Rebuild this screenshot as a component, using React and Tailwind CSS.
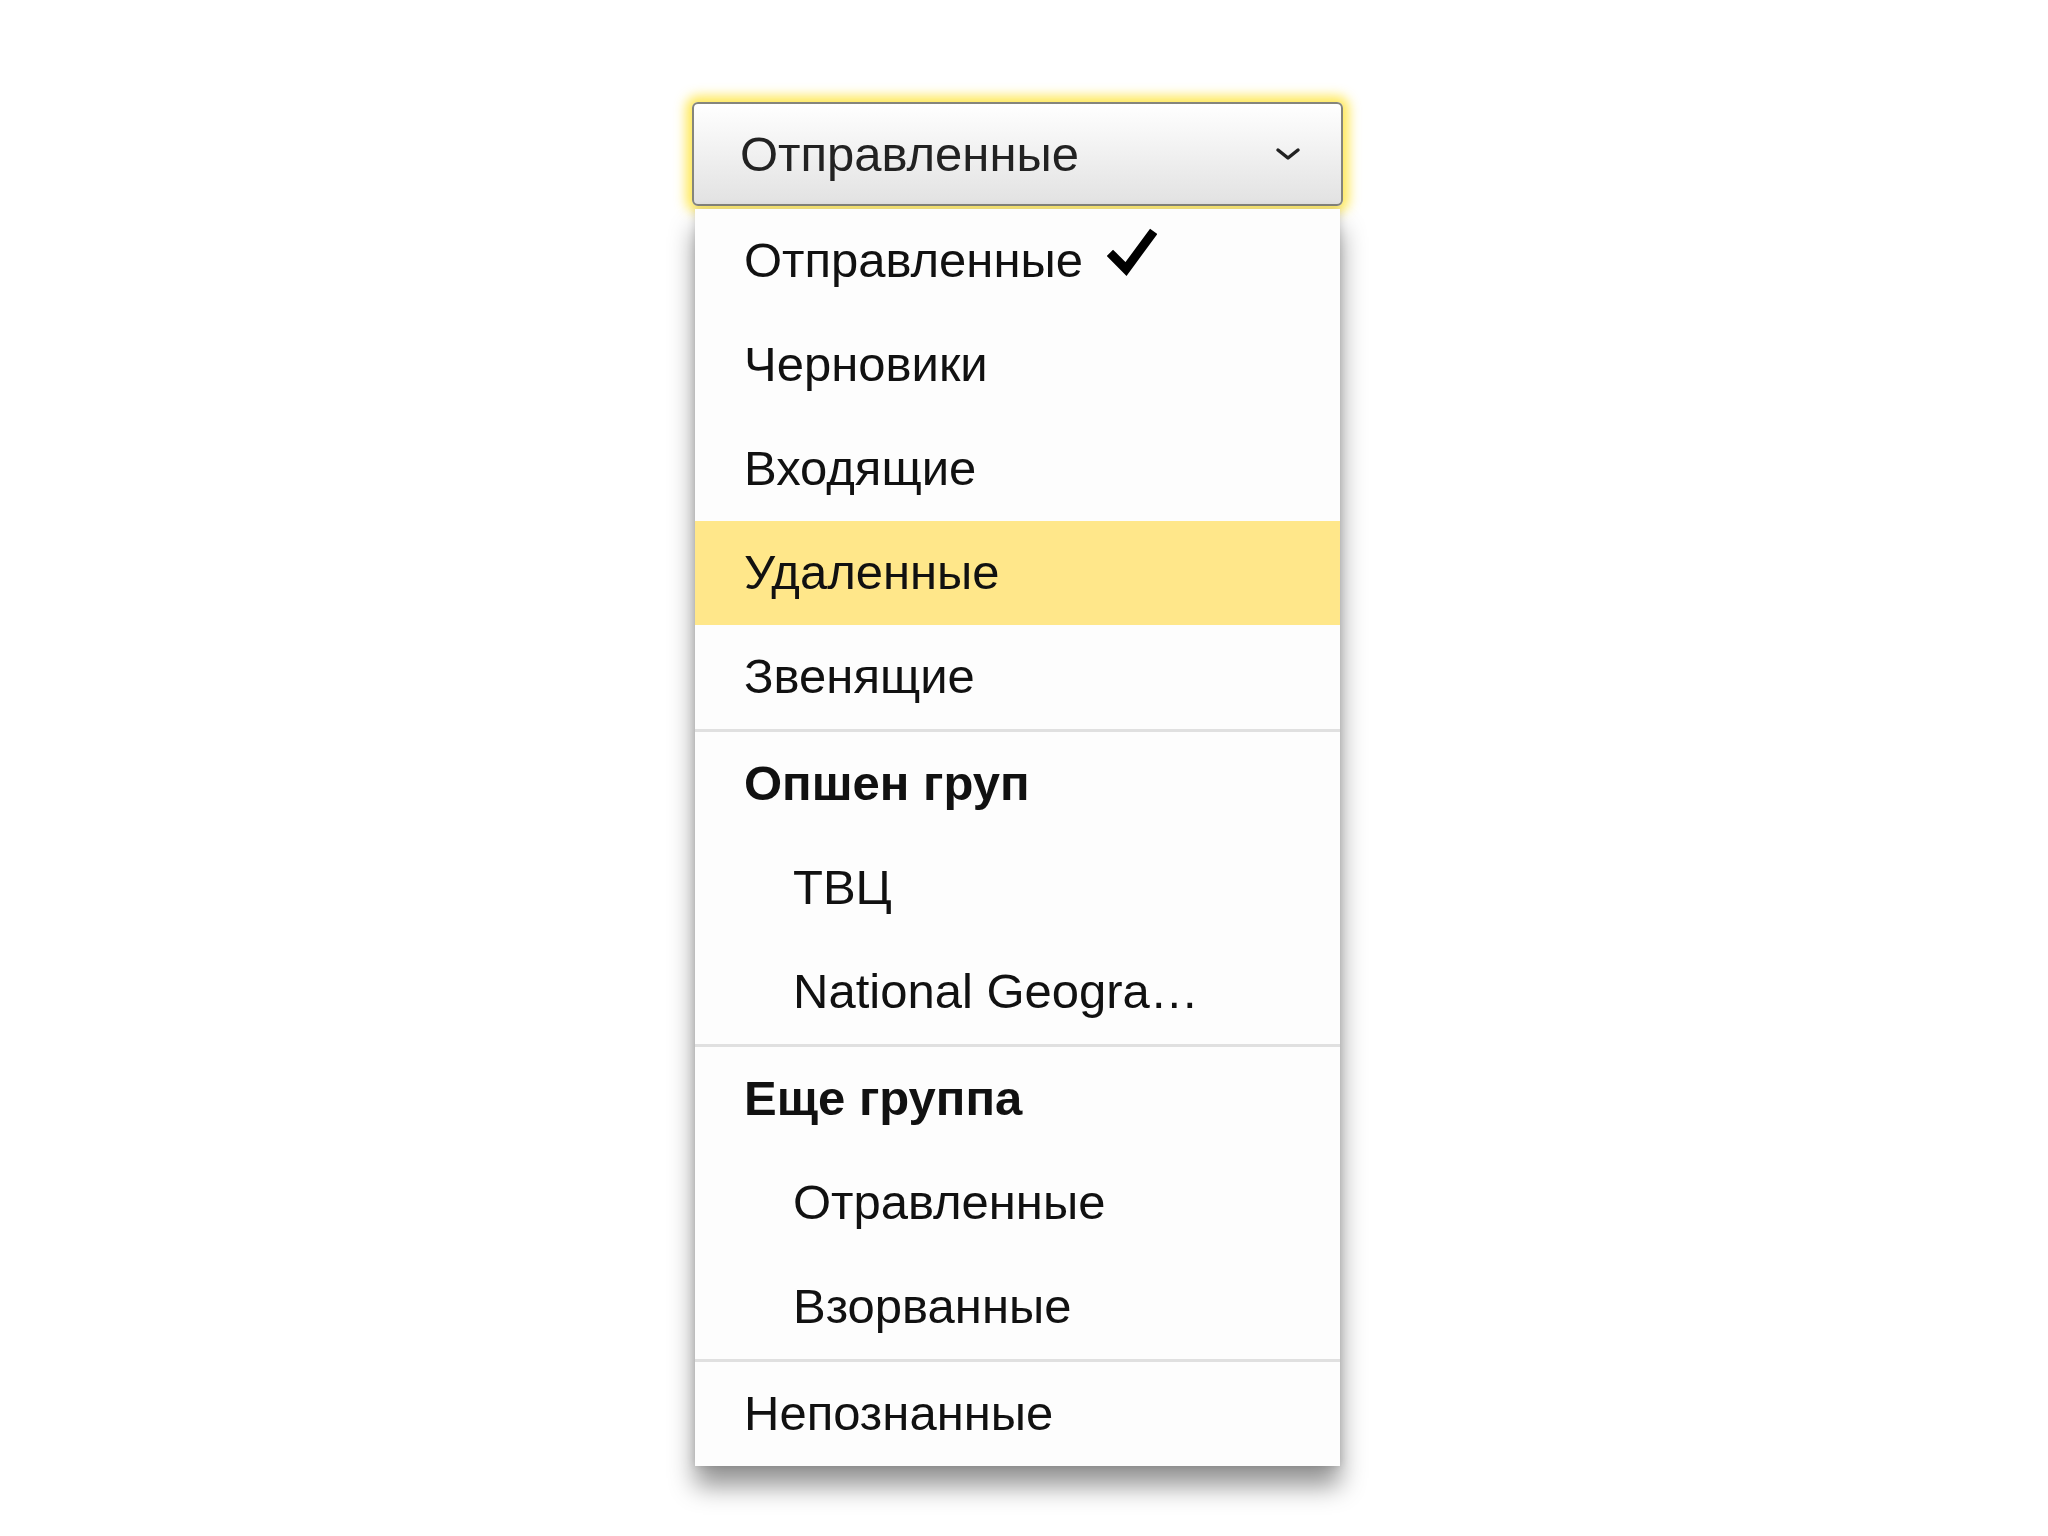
import React from "react";

const groups = [
  {
    items: [
      { label: "Отправленные", checked: true },
      { label: "Черновики" },
      { label: "Входящие" },
      { label: "Удаленные", active: true },
      { label: "Звенящие" },
    ],
  },
  {
    title: "Опшен груп",
    items: [{ label: "ТВЦ" }, { label: "National Geogra…" }],
  },
  {
    title: "Еще группа",
    items: [{ label: "Отравленные" }, { label: "Взорванные" }],
  },
  {
    items: [{ label: "Непознанные" }],
  },
];

const Check = () => (
  <svg width="50" height="50" viewBox="0 0 50 50" className="ml-6 -mt-4">
    <path
      d="M6 28 L19 41 L44 7"
      fill="none"
      stroke="#000"
      strokeWidth="9"
      strokeLinecap="square"
      strokeLinejoin="miter"
    />
  </svg>
);

const Chevron = () => (
  <svg width="26" height="16" viewBox="0 0 26 16">
    <polyline
      points="3,4 13,12 23,4"
      fill="none"
      stroke="#222"
      strokeWidth="3.5"
      strokeLinecap="round"
      strokeLinejoin="round"
    />
  </svg>
);

const App = () => {
  return (
    <div
      className="w-[2048px] h-[1536px] bg-white overflow-hidden pt-[102px] pl-[692px]"
      style={{ fontFamily: '"Liberation Sans", Arial, sans-serif' }}
    >
      <div className="w-[651px]">
        {/* Select button */}
        <button className="w-full h-[104px] flex items-center justify-between pl-[46px] pr-[40px] rounded-[6px] border-2 border-[#85857c] bg-gradient-to-b from-[#ffffff] to-[#e2e2e2] shadow-[0_0_12px_6px_rgba(255,224,30,0.75)]">
          <span className="text-[49px] text-[#222] leading-none">Отправленные</span>
          <Chevron />
        </button>

        {/* Dropdown */}
        <div className="mt-[3px] mx-[3px] bg-[#fdfdfd] shadow-[0_20px_24px_rgba(0,0,0,0.42),0_0_8px_rgba(0,0,0,0.15)]">
          {groups.map((group, gi) => (
            <div
              key={gi}
              className={gi > 0 ? "border-t-[3px] border-[#e0e0e0]" : ""}
            >
              {group.title && (
                <div className="h-[104px] flex items-center pl-[49px] text-[49px] font-bold text-[#111]">
                  {group.title}
                </div>
              )}
              {group.items.map((item) => (
                <div
                  key={item.label}
                  className={`h-[104px] flex items-center text-[49px] text-[#111] ${
                    group.title ? "pl-[98px]" : "pl-[49px]"
                  } ${item.active ? "bg-[#ffe78a]" : ""}`}
                >
                  <span>{item.label}</span>
                  {item.checked && <Check />}
                </div>
              ))}
            </div>
          ))}
        </div>
      </div>
    </div>
  );
};

export default App;
